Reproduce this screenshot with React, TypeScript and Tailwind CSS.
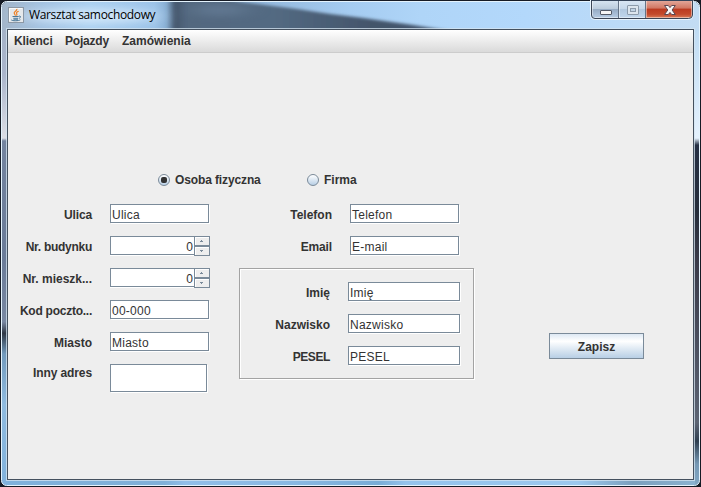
import type { ReactNode } from "react";

function Label({ children, className = "" }: { children: ReactNode; className?: string }) {
  return (
    <span className={`block h-5 text-right text-[12px] leading-[22px] font-bold whitespace-nowrap text-[#333] ${className}`}>
      {children}
    </span>
  );
}

function Field({ value, className }: { value: string; className: string }) {
  return (
    <div
      className={`h-[19px] border border-[#7a8a99] bg-white pl-px text-[12px] leading-[20px] tracking-[0.25px] whitespace-nowrap text-[#333] shadow-[1px_1px_0_#fff] ${className}`}
    >
      {value}
    </div>
  );
}

function Spinner() {
  return (
    <div className="flex h-5 w-[100px]">
      <div className="h-[19px] w-[84px] border border-r-0 border-[#7a8a99] bg-white pr-px text-right text-[12px] leading-[20px] text-[#333] shadow-[0_1px_0_#fff]">
        0
      </div>
      <div className="flex w-4 flex-col">
        <div className="flex h-[10px] items-center justify-center border border-[#7a8a99] shadow-[inset_1px_1px_0_#fff]">
          <svg width="6" height="2" shapeRendering="crispEdges">
            <path d="M2 0h1v1h1v1H1V1h1z" fill="#7a8a99" />
          </svg>
        </div>
        <div className="flex h-[10px] items-center justify-center border border-[#7a8a99] shadow-[inset_1px_1px_0_#fff]">
          <svg width="6" height="2" shapeRendering="crispEdges">
            <path d="M1 0h3v1H3v1H2V1H1z" fill="#7a8a99" />
          </svg>
        </div>
      </div>
    </div>
  );
}

function Radio({ checked, children, className }: { checked?: boolean; children: string; className: string }) {
  return (
    <div className={`flex items-center text-[12px] leading-5 font-bold text-[#333] ${className}`}>
      <div className="mr-[5px] flex h-3 w-3 items-center justify-center rounded-full border border-[#7a8a99] bg-linear-to-b from-white to-[#b8cfe5]">
        {checked && <div className="h-1.5 w-1.5 rounded-[2px] bg-[#333]" />}
      </div>
      {children}
    </div>
  );
}

function Glass() {
  return (
    <svg className="absolute inset-0" width="701" height="487">
      <defs>
        <linearGradient id="top" x1="0" x2="701" y1="0" y2="0" gradientUnits="userSpaceOnUse">
          <stop offset="0" stopColor="#a3b5c9" />
          <stop offset=".06" stopColor="#a3c2e1" />
          <stop offset=".13" stopColor="#a9cff0" />
          <stop offset=".22" stopColor="#9cc3e8" />
          <stop offset=".24" stopColor="#88aed2" />
          <stop offset=".34" stopColor="#8fb4d8" />
          <stop offset=".5" stopColor="#a5ccf1" />
          <stop offset=".6" stopColor="#afd5f8" />
          <stop offset=".75" stopColor="#b3d8fb" />
          <stop offset="1" stopColor="#c3dcf3" />
        </linearGradient>
        <linearGradient id="shade" x1="170" x2="430" y1="0" y2="0" gradientUnits="userSpaceOnUse">
          <stop offset="0" stopColor="#3c4b60" />
          <stop offset=".06" stopColor="#52677f" />
          <stop offset=".4" stopColor="#536a82" />
          <stop offset=".78" stopColor="#43546a" />
          <stop offset="1" stopColor="#42566f" />
        </linearGradient>
        <linearGradient id="left" x1="0" x2="0" y1="28" y2="487" gradientUnits="userSpaceOnUse">
          <stop offset="0" stopColor="#a4b2c7" />
          <stop offset=".1" stopColor="#aab5cb" />
          <stop offset=".24" stopColor="#dcdee5" />
          <stop offset=".246" stopColor="#74849f" />
          <stop offset=".5" stopColor="#6a7b98" />
          <stop offset=".64" stopColor="#7988a2" />
          <stop offset=".665" stopColor="#2f3846" />
          <stop offset=".71" stopColor="#729abd" />
          <stop offset=".82" stopColor="#8fbbe0" />
          <stop offset="1" stopColor="#80b1db" />
        </linearGradient>
        <linearGradient id="right" x1="0" x2="0" y1="28" y2="487" gradientUnits="userSpaceOnUse">
          <stop offset="0" stopColor="#bfdbf3" />
          <stop offset=".24" stopColor="#e4f1fd" />
          <stop offset=".255" stopColor="#253044" />
          <stop offset=".4" stopColor="#252d3a" />
          <stop offset=".5" stopColor="#393a48" />
          <stop offset=".86" stopColor="#5c6473" />
          <stop offset=".9" stopColor="#2e3e4f" />
          <stop offset=".95" stopColor="#7598b4" />
          <stop offset="1" stopColor="#83a8c5" />
        </linearGradient>
        <linearGradient id="bottom">
          <stop offset="0" stopColor="#7fb1db" />
          <stop offset=".23" stopColor="#80b0d8" />
          <stop offset=".26" stopColor="#91bee8" />
          <stop offset=".42" stopColor="#89b8e2" />
          <stop offset=".54" stopColor="#79acd6" />
          <stop offset=".58" stopColor="#94c3ec" />
          <stop offset=".83" stopColor="#9cc8ee" />
          <stop offset=".91" stopColor="#7ba0bd" />
          <stop offset="1" stopColor="#8bb2d0" />
        </linearGradient>
        <filter id="soft" x="-10%" y="-30%" width="120%" height="160%">
          <feGaussianBlur stdDeviation="3 1.8" />
        </filter>
        <filter id="wide" x="-40%" y="-100%" width="180%" height="300%">
          <feGaussianBlur stdDeviation="12 4" />
        </filter>
        <clipPath id="bar">
          <rect width="701" height="30" />
        </clipPath>
      </defs>
      <rect width="701" height="30" fill="url(#top)" />
      <g clipPath="url(#bar)">
        <path d="M171-8H200L240 2L297 9L330 14L363 18L413 25L450 31V44H171Z" fill="url(#shade)" filter="url(#soft)" />
        <ellipse cx="220" cy="10" rx="28" ry="5" fill="#7088a3" opacity=".6" filter="url(#wide)" />
        <ellipse cx="90" cy="16" rx="68" ry="7" fill="#dcedfc" opacity=".8" filter="url(#wide)" />
      </g>
      <rect y="30" width="8" height="457" fill="url(#left)" />
      <rect x="693" y="30" width="8" height="457" fill="url(#right)" />
      <rect x="6" y="479" width="689" height="8" fill="url(#bottom)" />
      <path d="M0 0H701V487H0ZM7.5 1.5A6 6 0 0 0 1.5 7.5V480.5A5 5 0 0 0 6.5 485.5H694.5A5 5 0 0 0 699.5 480.5V7.5A6 6 0 0 0 693.5 1.5Z" fill="#161b25" fillRule="evenodd" />
      <rect x="1.5" y="1.5" width="698" height="484" rx="5" fill="none" stroke="#e4f3fd" />
      <rect x="6.5" y="28.5" width="688" height="452" fill="none" stroke="#d5e5f2" strokeOpacity=".75" />
      <rect x="7.5" y="29.5" width="686" height="450" fill="none" stroke="#44505e" />
    </svg>
  );
}

function JavaIcon() {
  return (
    <svg width="16" height="16" viewBox="0 0 16 16" className="mt-[7px]">
      <rect x=".5" y=".5" width="15" height="15" fill="#e5e8eb" stroke="#8c98a5" />
      <path d="M1.5 14V1.5H14" fill="none" stroke="#fafafa" />
      <path d="M8.9 1.8C9.4 4 5.8 4.3 6.2 6.2C6.4 7.2 7.5 7.6 7.4 8.8M10.7 4.3C8.7 5 8 5.8 8.7 6.7C9.1 7.4 9 8 8.5 8.6" fill="none" stroke="#ed8126" strokeWidth="1.2" />
      <path d="M4.5 9.5H10.7M5.3 11.3H10M10.8 9.2C13.3 8.5 13 10.9 10.8 11.4M3.2 12.8C4 14.2 10.8 14 12.4 12.8M5.5 12.8H10" fill="none" stroke="#4b7899" />
    </svg>
  );
}

function WindowControls() {
  return (
    <svg width="104" height="21" viewBox="0 0 104 21">
      <defs>
        <linearGradient id="btn" x1="0" x2="0" y1="0" y2="1">
          <stop offset="0" stopColor="#d9e6f3" />
          <stop offset=".45" stopColor="#bdcddd" />
          <stop offset=".46" stopColor="#94a9c2" />
          <stop offset="1" stopColor="#bad0e8" />
        </linearGradient>
        <linearGradient id="dim" x1="0" x2="0" y1="0" y2="1">
          <stop offset="0" stopColor="#dae7f4" />
          <stop offset=".48" stopColor="#c5d7ea" />
          <stop offset=".5" stopColor="#b2c8df" />
          <stop offset="1" stopColor="#c2d8ee" />
        </linearGradient>
        <linearGradient id="close" x1="0" x2="0" y1="0" y2="1">
          <stop offset="0" stopColor="#e5ac9f" />
          <stop offset=".44" stopColor="#d17561" />
          <stop offset=".46" stopColor="#bb391f" />
          <stop offset=".75" stopColor="#c34a2c" />
          <stop offset="1" stopColor="#df8964" />
        </linearGradient>
        <clipPath id="controls">
          <path d="M1 0H102V15Q102 18 99 18H4Q1 18 1 15Z" />
        </clipPath>
      </defs>
      <path d="M.5 0V15.5Q.5 19.5 4.5 19.5H99Q103 19.5 103 15.5V0" fill="none" stroke="#e9f5ff" />
      <g clipPath="url(#controls)">
        <rect x="1" width="27" height="19" fill="url(#btn)" />
        <rect x="28" width="27" height="19" fill="url(#dim)" />
        <rect x="55" width="48" height="19" fill="url(#close)" />
        <path d="M2.5 1V17M29.5 1V17M56.5 1V17M101.5 1V17M2 17.5H102" stroke="#fff" strokeOpacity=".45" fill="none" />
        <path d="M28.5 0V19M55.5 0V19" stroke="#657487" />
      </g>
      <path d="M1.5 0V15Q1.5 18.5 5 18.5H98.5Q102.5 18.5 102.5 15V0" fill="none" stroke="#3b4555" />
      <path d="M1 .5H103" stroke="#35445a" />
      <rect x="10.5" y="10.5" width="11" height="4" rx=".5" fill="#f6f6f6" stroke="#535a67" />
      <rect x="37.5" y="5.5" width="11" height="9" rx=".5" fill="#dce5ee" stroke="#8c9bab" />
      <rect x="40.5" y="8.5" width="5" height="3" fill="#c1d3e5" stroke="#8c9bab" />
      <path d="M74.5 5.5H78.3L80 7.6L81.7 5.5H85.3L82.1 10L85.3 14.5H81.7L80 12.4L78.3 14.5H74.5L77.8 10Z" fill="#f7f7f7" stroke="#5b4650" />
    </svg>
  );
}

export default function App() {
  return (
    <div className="relative h-[487px] w-[701px] overflow-hidden bg-[#242832] font-['Liberation_Sans',Arial,sans-serif]">
      <Glass />
      <div className="relative flex h-full flex-col">
        <header className="flex h-[30px] items-start pr-[7px] pl-2">
          <JavaIcon />
          <h1 className="mt-[5px] ml-[5px] flex-1 font-['Open_Sans','Noto_Sans',sans-serif] text-[12px] leading-5 tracking-[-0.35px] text-black">
            Warsztat samochodowy
          </h1>
          <WindowControls />
        </header>
        <main className="mx-2 h-[449px] bg-[#eee]">
          <nav className="flex h-[23px] border-b border-[#ccc] bg-linear-to-b from-white to-[#dadada] pl-1.5 text-[12px] leading-[22px] font-bold text-[#333]">
            <span className="w-[51px] tracking-[-0.1px]">Klienci</span>
            <span className="w-[57px] tracking-[-0.2px]">Pojazdy</span>
            <span>Zamówienia</span>
          </nav>
          <div className="flex pt-[117px] pl-[150px]">
            <Radio checked className="w-[149px] tracking-[-0.12px]">Osoba fizyczna</Radio>
            <Radio className="">Firma</Radio>
          </div>
          <div className="flex items-start pt-[14px]">
            <section className="grid w-[231px] grid-cols-[84px_100px] gap-x-[18px] gap-y-3">
              <Label className="tracking-[-0.15px]">Ulica</Label>
              <Field value="Ulica" className="w-[99px]" />
              <Label className="tracking-[-0.27px]">Nr. budynku</Label>
              <Spinner />
              <Label>Nr. mieszk...</Label>
              <Spinner />
              <Label className="tracking-[-0.25px]">Kod poczto...</Label>
              <Field value="00-000" className="w-[99px]" />
              <Label>Miasto</Label>
              <Field value="Miasto" className="w-[99px]" />
              <Label className="-mt-0.5 tracking-[-0.1px]">Inny adres</Label>
              <div className="h-7 w-[97px] border border-[#7a8a99] bg-white shadow-[1px_1px_0_#fff]" />
            </section>
            <section className="w-[235px]">
              <div className="grid grid-cols-[93px_109px] gap-x-[18px] gap-y-3">
                <Label>Telefon</Label>
                <Field value="Telefon" className="w-[109px]" />
                <Label className="tracking-[-0.15px]">Email</Label>
                <Field value="E-mail" className="w-[109px]" />
              </div>
              <div className="mt-3 grid h-[111px] w-[235px] grid-cols-[90px_112px] content-start gap-x-[18px] gap-y-3 border border-[#a3a3a3] pt-[13px] shadow-[inset_1px_1px_0_#fff,1px_1px_0_#fff]">
                <Label>Imię</Label>
                <Field value="Imię" className="w-[112px]" />
                <Label>Nazwisko</Label>
                <Field value="Nazwisko" className="w-[112px]" />
                <Label className="tracking-[-0.4px]">PESEL</Label>
                <Field value="PESEL" className="w-[112px]" />
              </div>
            </section>
            <button className="mt-[129px] ml-[75px] h-[26px] w-[95px] border border-[#7a8a99] bg-linear-to-b from-[#dde8f3] via-white via-30% to-[#b8cfe5] pt-0.5 text-[12px] leading-[22px] font-bold text-[#333]">
              Zapisz
            </button>
          </div>
        </main>
      </div>
    </div>
  );
}
